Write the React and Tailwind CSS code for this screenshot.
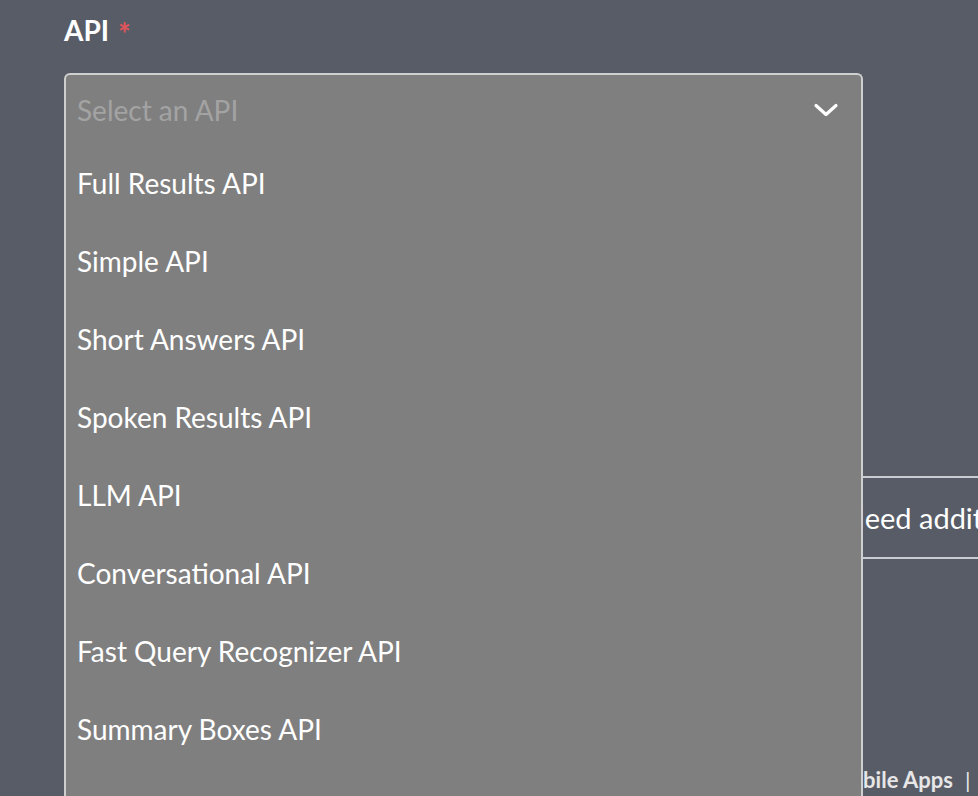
import React from 'react';

const apis = [
  'Full Results API',
  'Simple API',
  'Short Answers API',
  'Spoken Results API',
  'LLM API',
  'Conversational API',
  'Fast Query Recognizer API',
  'Summary Boxes API',
  'Instant Calculators API',
];

function Chevron() {
  return (
    <svg width="26" height="16" viewBox="0 0 26 16" fill="none">
      <path d="M3 3.5 L13 12.5 L23 3.5" stroke="white" strokeWidth="3.2" strokeLinecap="round" strokeLinejoin="round" />
    </svg>
  );
}

export default function App() {
  return (
    <div className="relative w-[978px] h-[796px] overflow-hidden bg-[#585c66] text-white font-['Lato','Liberation_Sans',sans-serif]">
      <div className="pl-[64px] pt-[12px]">
        <label className="flex items-start gap-[9px] h-[36px]">
          <span className="text-[28px] leading-[36px] font-bold">API</span>
          <span className="text-[30px] leading-[30px] mt-[6px] font-bold text-[#e2545c]">*</span>
        </label>

        <div className="relative mt-[25px] w-[799px] z-10">
          <div className="h-[71px] flex items-center justify-between pl-[11px] pr-[22px] bg-[#7f7f7f] border-2 border-b-0 border-[#cfcfcf] rounded-t-[6px]">
            <span className="text-[28px] text-[#a3a3a3]">Select an API</span>
            <Chevron />
          </div>
          <ul className="absolute left-0 top-full w-full bg-[#7f7f7f] border-x-2 border-[#cfcfcf]">
            {apis.map(name => (
              <li key={name} className="h-[78px] flex items-center pl-[11px] text-[28px]">
                {name}
              </li>
            ))}
          </ul>
        </div>

        <div className="mt-[332px] ml-[560px] h-[83px] border-y-2 border-[#c9ccd3] flex items-center whitespace-nowrap">
          <span className="ml-[219px] text-[29px]">Need additional help?</span>
        </div>

        <div className="mt-[204px] ml-[640px] whitespace-nowrap text-[22px] font-bold text-[#e6e6e6]">
          <span className="ml-[126px]">Mobile Apps</span>
          <span className="ml-[12px] font-normal">|</span>
        </div>
      </div>
    </div>
  );
}
